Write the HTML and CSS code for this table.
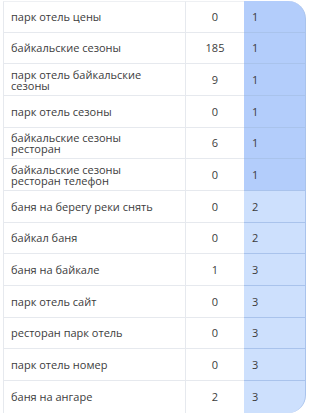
FILE: index.html
```html
<!DOCTYPE html>
<html lang="ru">
<head>
<meta charset="utf-8">
<link rel="stylesheet" href="styles.css">
</head>
<body>
<div class="table">
  <div class="row"><div class="c q">парк отель цены</div><div class="c n">0</div><div class="c r r1 first">1</div></div>
  <div class="row"><div class="c q">байкальские сезоны</div><div class="c n">185</div><div class="c r r1">1</div></div>
  <div class="row"><div class="c q">парк отель байкальские<br>сезоны</div><div class="c n">9</div><div class="c r r1">1</div></div>
  <div class="row"><div class="c q">парк отель сезоны</div><div class="c n">0</div><div class="c r r1">1</div></div>
  <div class="row"><div class="c q">байкальские сезоны<br>ресторан</div><div class="c n">6</div><div class="c r r1">1</div></div>
  <div class="row"><div class="c q">байкальские сезоны<br>ресторан телефон</div><div class="c n">0</div><div class="c r r1">1</div></div>
  <div class="row"><div class="c q">баня на берегу реки снять</div><div class="c n">0</div><div class="c r r2">2</div></div>
  <div class="row"><div class="c q">байкал баня</div><div class="c n">0</div><div class="c r r2">2</div></div>
  <div class="row"><div class="c q">баня на байкале</div><div class="c n">1</div><div class="c r r2">3</div></div>
  <div class="row"><div class="c q">парк отель сайт</div><div class="c n">0</div><div class="c r r2">3</div></div>
  <div class="row"><div class="c q">ресторан парк отель</div><div class="c n">0</div><div class="c r r2">3</div></div>
  <div class="row"><div class="c q">парк отель номер</div><div class="c n">0</div><div class="c r r2">3</div></div>
  <div class="row last"><div class="c q">баня на ангаре</div><div class="c n">2</div><div class="c r r2 lastr">3</div></div>
</div>
</body>
</html>
```
FILE: styles.css
```css
html, body {
  margin: 0;
  padding: 0;
  background: #ffffff;
}
body {
  font-family: "Open Sans", "Liberation Sans", sans-serif;
  font-size: 11px;
  color: #3c3c3c;
}
.table {
  margin-left: 3px;
  padding-top: 1px;
  width: 303px;
  display: flex;
  flex-direction: column;
}
.row {
  display: grid;
  grid-template-columns: 183px 58px 62px;
  height: 31.67px;
}
.c {
  display: flex;
  align-items: center;
  box-sizing: border-box;
  border-bottom: 1px solid #e6e9ee;
  line-height: 11px;
}
.q {
  border-left: 1px solid #e6e9ee;
  border-right: 1px solid #e6e9ee;
  padding-left: 7px;
}
.row:first-child .q,
.row:first-child .n {
  border-top: 1px solid #eef0f3;
}
.n {
  justify-content: center;
}
.r {
  padding-left: 8px;
  border-bottom: 1px solid #a9c3ec;
  border-right: 1px solid #a9c3ec;
}
.r1 { background: #b3cdfb; }
.r2 { background: #cde0fd; }
.first { border-top-right-radius: 18px; }
.last .c { border-bottom: none; }
.lastr { border-bottom-right-radius: 18px; border-bottom: none; }
```
